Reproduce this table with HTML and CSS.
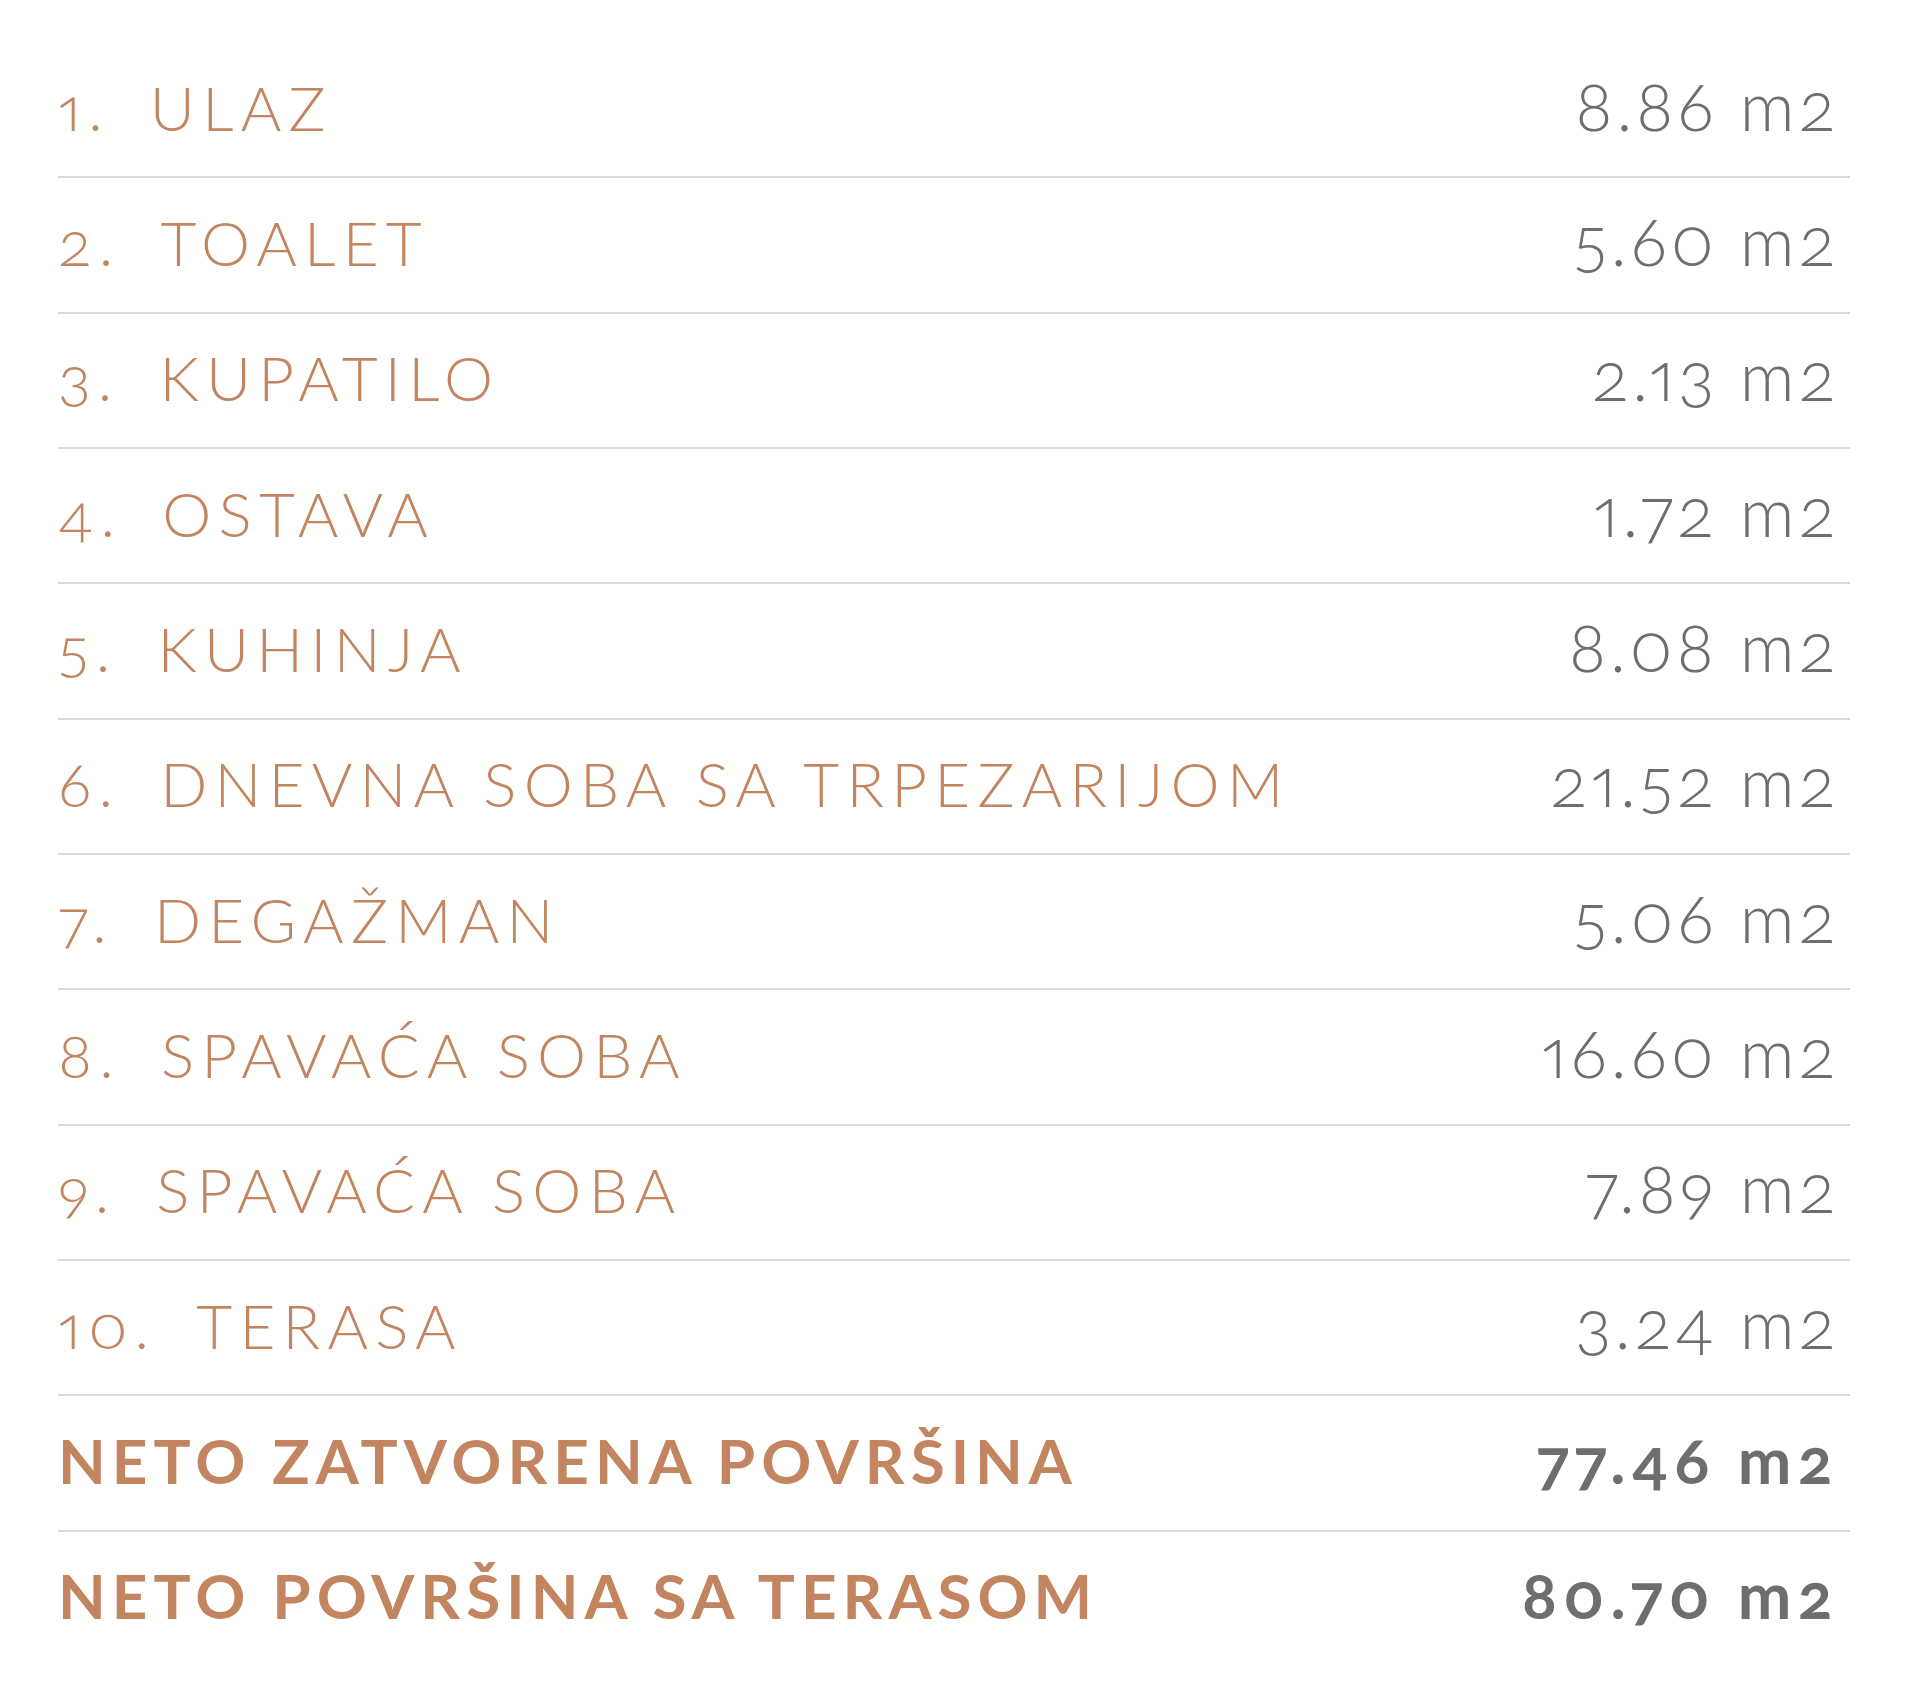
FILE: index.html
```
<!DOCTYPE html>
<html lang="sr">
<head>
<meta charset="utf-8">
<title>Struktura stana</title>
<link rel="stylesheet" href="styles.css">
</head>
<body>
<main class="areas">
  <div class="row"><span class="label"><span class="idx">1.</span><span class="name">ULAZ</span></span><span class="area">8.86 m2</span></div>
  <div class="row"><span class="label"><span class="idx">2.</span><span class="name">TOALET</span></span><span class="area">5.60 m2</span></div>
  <div class="row"><span class="label"><span class="idx">3.</span><span class="name">KUPATILO</span></span><span class="area">2.13 m2</span></div>
  <div class="row"><span class="label"><span class="idx">4.</span><span class="name">OSTAVA</span></span><span class="area">1.72 m2</span></div>
  <div class="row"><span class="label"><span class="idx">5.</span><span class="name">KUHINJA</span></span><span class="area">8.08 m2</span></div>
  <div class="row"><span class="label"><span class="idx">6.</span><span class="name">DNEVNA SOBA SA TRPEZARIJOM</span></span><span class="area">21.52 m2</span></div>
  <div class="row"><span class="label"><span class="idx">7.</span><span class="name">DEGAŽMAN</span></span><span class="area">5.06 m2</span></div>
  <div class="row"><span class="label"><span class="idx">8.</span><span class="name">SPAVAĆA SOBA</span></span><span class="area">16.60 m2</span></div>
  <div class="row"><span class="label"><span class="idx">9.</span><span class="name">SPAVAĆA SOBA</span></span><span class="area">7.89 m2</span></div>
  <div class="row"><span class="label"><span class="idx">10.</span><span class="name">TERASA</span></span><span class="area">3.24 m2</span></div>
  <div class="row total"><span class="label">NETO ZATVORENA POVRŠINA</span><span class="area">77.46 m2</span></div>
  <div class="row total last"><span class="label">NETO POVRŠINA SA TERASOM</span><span class="area">80.70 m2</span></div>
</main>
</body>
</html>
```
FILE: styles.css
```
html, body {
  margin: 0;
  padding: 0;
  background: #ffffff;
}

.areas {
  width: 1792px;
  margin: 0 0 0 58px;
  padding-top: 43px;
  font-family: Lato, "Noto Sans", sans-serif;
  font-variant-numeric: oldstyle-nums proportional-nums;
}

.row {
  display: flex;
  align-items: center;
  justify-content: space-between;
  height: 127.33px;
  padding-bottom: 6px;
  border-bottom: 2px solid #d9d9d9;
}

.row.last {
  border-bottom: none;
}

.label {
  display: flex;
  align-items: baseline;
  font-size: 62px;
  line-height: 62px;
  font-weight: 300;
  letter-spacing: 7.2px;
  color: #c28560;
  white-space: nowrap;
}

.idx {
  margin-right: 40px;
}

.area {
  font-size: 68px;
  line-height: 62px;
  font-weight: 300;
  letter-spacing: 3.8px;
  color: #6d6e71;
  padding-right: 11px;
  margin-top: -4px;
  white-space: nowrap;
}

.total .label {
  font-weight: 700;
  letter-spacing: 6px;
}

.total .area {
  font-size: 64px;
  font-weight: 700;
  letter-spacing: 6.4px;
  padding-right: 11px;
  margin-top: 0;
}
```
